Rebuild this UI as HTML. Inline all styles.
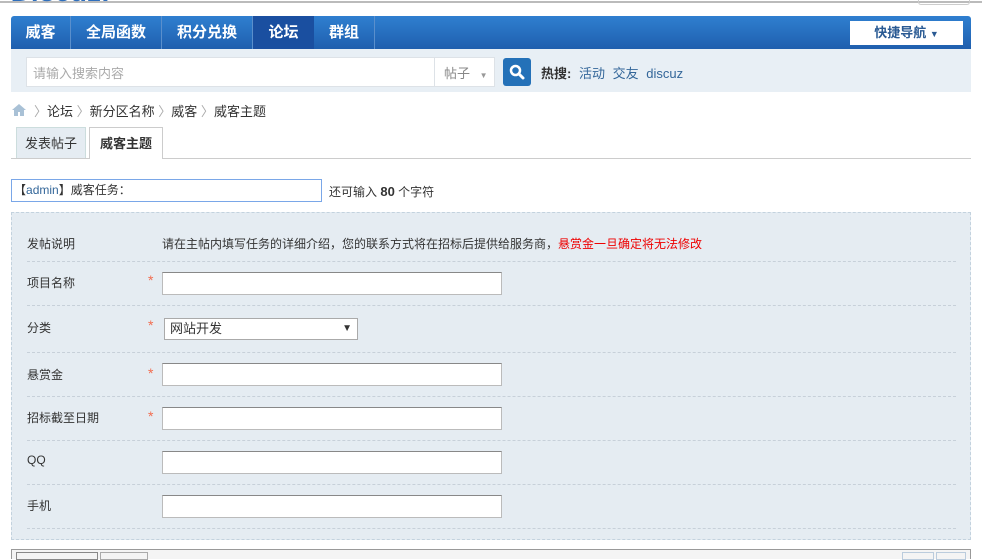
<!DOCTYPE html>
<html><head><meta charset="utf-8"><style>
*{margin:0;padding:0;box-sizing:border-box}
body{width:982px;height:558px;overflow:hidden;background:#fff;font:12px "Liberation Sans","Noto Sans CJK SC",sans-serif;color:#333;position:relative}
.a{position:absolute}
.nav{left:11px;top:16px;width:960px;height:33px;background:linear-gradient(#2f7fd0,#1f5fae);border-radius:3px 3px 0 0}
.nav span{position:absolute;top:0;height:33px;line-height:33px;color:#fff;font-size:15px;font-weight:bold;text-align:center;border-right:1px solid #5a8fcc}
.sb{left:11px;top:49px;width:960px;height:43px;background:#e8eff5}
.inp{background:#fff;border:1px solid #ccc}
.row{position:absolute;left:15px;width:929px;border-bottom:1px dashed #c7d0d9}
.lbl{position:absolute;left:0;font-size:12px;color:#333}
.star{position:absolute;left:121px;color:#f26c4f;font-size:14px}
.fi{position:absolute;left:135px;width:340px;height:23px;background:#fff;border:1px solid #bbb;border-top-color:#888}
</style></head><body>
<div class="a" style="left:0;top:1px;width:982px;height:2px;background:#bbb"></div>
<div class="a" style="left:12px;top:-24px;color:#2f6fbd;font:bold italic 28px 'Liberation Sans',sans-serif">Discuz!</div>
<div class="a" style="left:918px;top:0;width:52px;height:5px;border:1px solid #ccc;border-top:0;border-radius:0 0 3px 3px"></div>
<div class="a nav">
<span style="left:0;width:60px">威客</span>
<span style="left:60px;width:91px">全局函数</span>
<span style="left:151px;width:91px">积分兑换</span>
<span style="left:242px;width:61px;background:#1a4fa0;border-right:0">论坛</span>
<span style="left:303px;width:61px">群组</span>
<div class="a" style="left:839px;top:5px;width:113px;height:24px;background:#fff;color:#2a5a93;font-weight:bold;font-size:13px;line-height:24px;text-align:center">快捷导航 <i style="font-style:normal;font-size:9px">▼</i></div>
</div>
<div class="a sb"></div>
<div class="a inp" style="left:26px;top:57px;width:469px;height:30px;border-color:#dde2e7"></div>
<div class="a" style="left:33px;top:63px;color:#aaa;font-size:13px">请输入搜索内容</div>
<div class="a" style="left:434px;top:58px;width:1px;height:28px;background:#dde2e7"></div>
<div class="a" style="left:444px;top:63px;color:#888;font-size:13px">帖子 <span style="font-size:8px;color:#999;margin-left:6px">▼</span></div>
<div class="a" style="left:503px;top:58px;width:28px;height:28px;background:#2471b8;border-radius:3px"><svg width="28" height="28"><circle cx="12.5" cy="12.5" r="4.5" fill="none" stroke="#fff" stroke-width="2.5"/><path d="M16 16l4 4" stroke="#fff" stroke-width="3" stroke-linecap="round"/></svg></div>
<div class="a" style="left:541px;top:63px;font-size:13px"><b>热搜:</b> <span style="color:#336699;margin-left:4px">活动</span> <span style="color:#336699;margin-left:4px">交友</span> <span style="color:#336699;margin-left:4px">discuz</span></div>
<svg class="a" style="left:11px;top:103px" width="16" height="14"><path d="M8 1L1 7h2v6h4V9h2v4h4V7h2z" fill="#a9c1d6"/></svg>
<div class="a" style="left:34px;top:101px;font-size:13px;color:#333"><span style="color:#aaa">〉</span>论坛 <span style="color:#aaa">〉</span>新分区名称 <span style="color:#aaa">〉</span>威客 <span style="color:#aaa">〉</span>威客主题</div>
<div class="a" style="left:11px;top:158px;width:960px;height:1px;background:#ccc"></div>
<div class="a" style="left:16px;top:127px;width:70px;height:31px;background:#e5ecf2;border:1px solid #cdd;border-bottom:0;text-align:center;line-height:31px;font-size:13px">发表帖子</div>
<div class="a" style="left:89px;top:127px;width:74px;height:32px;background:#fff;border:1px solid #ccc;border-bottom:0;text-align:center;line-height:31px;font-size:13px;font-weight:bold">威客主题</div>
<div class="a" style="left:11px;top:179px;width:311px;height:23px;border:1px solid #7aa7e8;line-height:21px;padding-left:2px;font-size:12px">【<span style="color:#336699">admin</span>】威客任务：</div>
<div class="a" style="left:329px;top:183px;font-size:12px">还可输入 <b style="font-size:13px">80</b> 个字符</div>
<div class="a" style="left:11px;top:212px;width:960px;height:328px;background:#e5ecf2;border:1px dashed #c3d2de">
<div class="row" style="top:0;height:49px"><span class="lbl" style="top:22px">发帖说明</span><span class="a" style="left:135px;top:22px">请在主帖内填写任务的详细介绍，您的联系方式将在招标后提供给服务商，<span style="color:#e00">悬赏金一旦确定将无法修改</span></span></div>
<div class="row" style="top:49px;height:44px"><span class="lbl" style="top:12px">项目名称</span><span class="star" style="top:10px">*</span><div class="fi" style="top:10px"></div></div>
<div class="row" style="top:93px;height:47px"><span class="lbl" style="top:13px">分类</span><span class="star" style="top:11px">*</span><div class="fi" style="left:137px;top:12px;width:194px;height:22px;border-color:#aaa;padding-left:5px;line-height:20px;font-size:13px">网站开发<span style="position:absolute;right:5px;font-size:10px">▼</span></div></div>
<div class="row" style="top:140px;height:44px"><span class="lbl" style="top:13px">悬赏金</span><span class="star" style="top:12px">*</span><div class="fi" style="top:10px"></div></div>
<div class="row" style="top:184px;height:44px"><span class="lbl" style="top:12px">招标截至日期</span><span class="star" style="top:11px">*</span><div class="fi" style="top:10px"></div></div>
<div class="row" style="top:228px;height:44px"><span class="lbl" style="top:12px">QQ</span><div class="fi" style="top:10px"></div></div>
<div class="row" style="top:272px;height:44px"><span class="lbl" style="top:12px">手机</span><div class="fi" style="top:10px"></div></div>
</div>
<div class="a" style="left:11px;top:549px;width:960px;height:10px;border:1px solid #999;border-bottom:0;background:#f4f4f4"></div>
<div class="a" style="left:16px;top:552px;width:82px;height:8px;border:1px solid #888"></div>
<div class="a" style="left:100px;top:552px;width:48px;height:8px;border:1px solid #aaa"></div>
<div class="a" style="left:902px;top:552px;width:32px;height:8px;border:1px solid #bcd"></div>
<div class="a" style="left:936px;top:552px;width:30px;height:8px;border:1px solid #bcd"></div>
</body></html>
